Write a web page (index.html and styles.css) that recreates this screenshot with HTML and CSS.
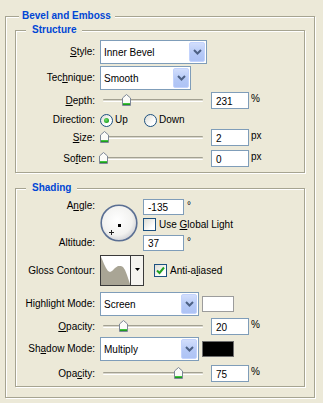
FILE: index.html
```html
<!DOCTYPE html>
<html>
<head>
<meta charset="utf-8">
<link rel="stylesheet" href="styles.css">
</head>
<body>
<div class="group outer">
  <span class="legend">Bevel and Emboss</span>

  <div class="group sub structure">
    <span class="legend">Structure</span>

    <div class="row r24">
      <span class="lbl"><u>S</u>tyle:</span>
      <div class="combo w107">
        <span class="combo-text">Inner Bevel</span>
        <span class="combo-btn"><svg width="9" height="6" viewBox="0 0 9 6"><path d="M1 1 L4.5 4.5 L8 1" fill="none" stroke="#4d6185" stroke-width="2"/></svg></span>
      </div>
    </div>

    <div class="row r24 mt2">
      <span class="lbl">Tec<u>h</u>nique:</span>
      <div class="combo w91">
        <span class="combo-text">Smooth</span>
        <span class="combo-btn"><svg width="9" height="6" viewBox="0 0 9 6"><path d="M1 1 L4.5 4.5 L8 1" fill="none" stroke="#4d6185" stroke-width="2"/></svg></span>
      </div>
    </div>

    <div class="row r17 mt2">
      <span class="lbl"><u>D</u>epth:</span>
      <div class="slider">
        <span class="track"></span>
        <span class="thumb" style="left:23.1%"><svg width="9" height="12" viewBox="0 0 9 12"><path d="M0.5 4 L4.5 0.5 L8.5 4 V11.5 H0.5 Z" fill="#fbfbf8" stroke="#7d8797"/><rect x="1" y="9" width="7" height="1" fill="#3fc43f"/><rect x="1" y="10" width="7" height="1" fill="#1f9a1f"/></svg></span>
      </div>
      <span class="tb">231</span>
      <span class="unit">%</span>
    </div>

    <div class="row r16 mt3">
      <span class="lbl">Direction:</span>
      <span class="opt opt-up"><span class="radio"><span class="dot"></span></span><span class="opt-text">Up</span></span>
      <span class="opt"><span class="radio"></span><span class="opt-text">Down</span></span>
    </div>

    <div class="row r17 mt1">
      <span class="lbl"><u>S</u>ize:</span>
      <div class="slider">
        <span class="track"></span>
        <span class="thumb" style="left:0.8%"><svg width="9" height="12" viewBox="0 0 9 12"><path d="M0.5 4 L4.5 0.5 L8.5 4 V11.5 H0.5 Z" fill="#fbfbf8" stroke="#7d8797"/><rect x="1" y="9" width="7" height="1" fill="#3fc43f"/><rect x="1" y="10" width="7" height="1" fill="#1f9a1f"/></svg></span>
      </div>
      <span class="tb">2</span>
      <span class="unit">px</span>
    </div>

    <div class="row r17 mt4">
      <span class="lbl">So<u>f</u>ten:</span>
      <div class="slider">
        <span class="track"></span>
        <span class="thumb" style="left:0%"><svg width="9" height="12" viewBox="0 0 9 12"><path d="M0.5 4 L4.5 0.5 L8.5 4 V11.5 H0.5 Z" fill="#fbfbf8" stroke="#7d8797"/><rect x="1" y="9" width="7" height="1" fill="#3fc43f"/><rect x="1" y="10" width="7" height="1" fill="#1f9a1f"/></svg></span>
      </div>
      <span class="tb">0</span>
      <span class="unit">px</span>
    </div>
  </div>

  <div class="group sub shading">
    <span class="legend">Shading</span>

    <div class="angle-block">
      <div class="lbl-col">
        <span class="lbl lbl-angle">A<u>n</u>gle:</span>
        <span class="lbl lbl-alt">Altitude:</span>
      </div>
      <svg class="dial" width="38" height="38" viewBox="0 0 38 38">
        <defs>
          <radialGradient id="dg" cx="45%" cy="42%" r="60%">
            <stop offset="0" stop-color="#ffffff"/>
            <stop offset="0.7" stop-color="#f2f2f0"/>
            <stop offset="1" stop-color="#cfd0d4"/>
          </radialGradient>
        </defs>
        <circle cx="19" cy="19" r="17.8" fill="url(#dg)" stroke="#5a6f93" stroke-width="1.6"/>
        <rect x="18" y="20" width="3" height="3" fill="#000"/>
        <path d="M9 28.5 H14 M11.5 26 V31" stroke="#222" stroke-width="1"/>
      </svg>
      <div class="angle-fields">
        <div class="row r16">
          <span class="tb tb-ang">-135</span>
          <span class="unit">°</span>
        </div>
        <div class="row r13 mt3">
          <span class="check"></span>
          <span class="check-text">Use <u>G</u>lobal Light</span>
        </div>
        <div class="row r16 mt4">
          <span class="tb tb-ang">37</span>
          <span class="unit">°</span>
        </div>
      </div>
    </div>

    <div class="row r31 mt4">
      <span class="lbl">Gloss Contour:</span>
      <div class="contour">
        <svg class="contour-graph" width="29" height="29" viewBox="0 0 29 29">
          <path d="M0 1 L1 3 L3 8 L5 12 L7 15 L9 16 L11 15 L14 12 L17 10 L20 10 L22 11 L24 14 L26 19 L28 25 L29 28 L29 29 L0 29 Z" fill="#a9a595"/>
        </svg>
        <span class="contour-btn"><svg width="5" height="3" viewBox="0 0 5 3"><path d="M0 0 H5 L2.5 3 Z" fill="#000"/></svg></span>
      </div>
      <span class="check check-aa"><svg width="11" height="11" viewBox="0 0 11 11"><path d="M2 5.5 L4.5 8 L9 2.5" fill="none" stroke="#21a121" stroke-width="2"/></svg></span>
      <span class="check-text">Anti-a<u>l</u>iased</span>
    </div>

    <div class="row r24 mt6">
      <span class="lbl">Highlight Mode:</span>
      <div class="combo w99">
        <span class="combo-text">Screen</span>
        <span class="combo-btn"><svg width="9" height="6" viewBox="0 0 9 6"><path d="M1 1 L4.5 4.5 L8 1" fill="none" stroke="#4d6185" stroke-width="2"/></svg></span>
      </div>
      <span class="swatch swatch-white"></span>
    </div>

    <div class="row r17 mt2">
      <span class="lbl"><u>O</u>pacity:</span>
      <div class="slider">
        <span class="track"></span>
        <span class="thumb" style="left:20%"><svg width="9" height="12" viewBox="0 0 9 12"><path d="M0.5 4 L4.5 0.5 L8.5 4 V11.5 H0.5 Z" fill="#fbfbf8" stroke="#7d8797"/><rect x="1" y="9" width="7" height="1" fill="#3fc43f"/><rect x="1" y="10" width="7" height="1" fill="#1f9a1f"/></svg></span>
      </div>
      <span class="tb">20</span>
      <span class="unit">%</span>
    </div>

    <div class="row r24 mt2">
      <span class="lbl">Sh<u>a</u>dow Mode:</span>
      <div class="combo w99">
        <span class="combo-text">Multiply</span>
        <span class="combo-btn"><svg width="9" height="6" viewBox="0 0 9 6"><path d="M1 1 L4.5 4.5 L8 1" fill="none" stroke="#4d6185" stroke-width="2"/></svg></span>
      </div>
      <span class="swatch swatch-black"></span>
    </div>

    <div class="row r17 mt4">
      <span class="lbl">Opa<u>c</u>ity:</span>
      <div class="slider">
        <span class="track"></span>
        <span class="thumb" style="left:75%"><svg width="9" height="12" viewBox="0 0 9 12"><path d="M0.5 4 L4.5 0.5 L8.5 4 V11.5 H0.5 Z" fill="#fbfbf8" stroke="#7d8797"/><rect x="1" y="9" width="7" height="1" fill="#3fc43f"/><rect x="1" y="10" width="7" height="1" fill="#1f9a1f"/></svg></span>
      </div>
      <span class="tb">75</span>
      <span class="unit">%</span>
    </div>
  </div>
</div>
</body>
</html>
```

FILE: styles.css
```css
html, body {
  margin: 0;
  padding: 0;
}

body {
  width: 323px;
  height: 403px;
  overflow: hidden;
  background: #ece9d8;
  font-family: "Liberation Sans", Arial, sans-serif;
  font-size: 10px;
  line-height: 12px;
  color: #000;
}

u {
  text-decoration: underline;
  text-underline-offset: 1px;
}

/* etched group boxes */
.group {
  position: relative;
  box-sizing: border-box;
  border: 1px solid #a6a491;
  box-shadow: inset 1px 1px 0 #fff, 1px 1px 0 #fff;
}

.outer {
  margin: 16px 0 0 5px;
  width: 310px;
  height: 382px;
  padding: 13px 9px 0 9px;
}

.sub {
  width: 290px;
}

.structure {
  height: 143px;
  padding-top: 9px;
}

.shading {
  margin-top: 15px;
  height: 199px;
  padding-top: 10px;
}

.legend {
  position: absolute;
  top: -7px;
  background: #ece9d8;
  color: #0046d5;
  font-weight: bold;
  line-height: 12px;
  white-space: nowrap;
}

.outer > .legend {
  left: 13px;
  padding: 0 4px 0 3px;
}

.sub > .legend {
  left: 10px;
  padding: 0 6px;
}

/* rows */
.row {
  display: flex;
  align-items: center;
}

.r13 { height: 13px; }
.r16 { height: 16px; }
.r17 { height: 17px; }
.r24 { height: 24px; }
.r31 { height: 31px; }

.mt1 { margin-top: 1px; }
.mt2 { margin-top: 2px; }
.mt3 { margin-top: 3px; }
.mt4 { margin-top: 4px; }
.mt6 { margin-top: 6px; }

.lbl {
  flex: none;
  width: 79px;
  margin-right: 5px;
  text-align: right;
  white-space: nowrap;
}

/* combo boxes */
.combo {
  flex: none;
  box-sizing: border-box;
  height: 24px;
  display: flex;
  padding: 1px;
  border: 1px solid #7f9db9;
  background: #fff;
}

.w107 { width: 107px; }
.w91 { width: 91px; }
.w99 { width: 99px; }

.combo-text {
  flex: 1;
  display: flex;
  align-items: center;
  padding-left: 2px;
  padding-top: 1px;
  white-space: nowrap;
}

.combo-btn {
  flex: none;
  box-sizing: border-box;
  width: 16px;
  display: flex;
  align-items: center;
  justify-content: center;
  border: 1px solid #c3d3fd;
  border-radius: 2px;
  background: linear-gradient(#d2defc, #b4c8f6 60%, #aec3f5);
}

/* sliders */
.slider {
  position: relative;
  flex: none;
  width: 100px;
  height: 17px;
  margin-left: 3px;
}

.track {
  position: absolute;
  left: 0;
  right: 0;
  top: 7px;
  height: 3px;
  border-radius: 1px;
  background: linear-gradient(#a3a192 0 1px, #d9d7cc 1px 2px, #ffffff 2px);
}

.thumb {
  position: absolute;
  top: 2px;
  margin-left: -4px;
  width: 9px;
  height: 12px;
  display: block;
}

.thumb svg {
  display: block;
}

/* text boxes */
.tb {
  flex: none;
  box-sizing: border-box;
  width: 38px;
  height: 17px;
  margin-left: 8px;
  padding-left: 4px;
  border: 1px solid #7f9db9;
  background: #fff;
  line-height: 15px;
  padding-top: 1px;
}

.tb-ang {
  width: 41px;
  height: 16px;
  margin-left: 0;
  line-height: 14px;
}

.unit {
  align-self: flex-start;
  margin-top: 1px;
  margin-left: 2px;
}

.tb-ang + .unit {
  margin-left: 3px;
}

/* radios */
.opt {
  display: flex;
  align-items: center;
}

.opt-up {
  width: 44px;
}

.radio {
  flex: none;
  box-sizing: border-box;
  width: 13px;
  height: 13px;
  border-radius: 50%;
  border: 1px solid #1c5180;
  background: linear-gradient(135deg, #dcdcd4, #ffffff 70%);
  display: flex;
  align-items: center;
  justify-content: center;
}

.dot {
  width: 5px;
  height: 5px;
  border-radius: 50%;
  background: radial-gradient(circle at 40% 40%, #6ee06e, #21a121 70%);
}

.opt-text {
  margin-left: 2px;
}

/* checkboxes */
.check {
  flex: none;
  box-sizing: border-box;
  width: 13px;
  height: 13px;
  border: 1px solid #1c5180;
  background: linear-gradient(135deg, #dcdcd4, #ffffff 75%);
  display: flex;
  align-items: center;
  justify-content: center;
}

.check-aa {
  margin-left: 10px;
}

.check-text {
  margin-left: 3px;
  white-space: nowrap;
}

/* angle block */
.angle-block {
  display: flex;
  align-items: flex-start;
  height: 52px;
}

.lbl-col {
  flex: none;
  display: flex;
  flex-direction: column;
}

.lbl-angle {
  margin-top: 1px;
}

.lbl-alt {
  margin-top: 25px;
}

.dial {
  flex: none;
  display: block;
  margin-top: 5px;
}

.angle-fields {
  margin-left: 5px;
  display: flex;
  flex-direction: column;
}

/* contour */
.contour {
  flex: none;
  box-sizing: border-box;
  width: 44px;
  height: 31px;
  display: flex;
  border: 1px solid #3a3a3a;
  background: #fff;
}

.contour-graph {
  display: block;
  flex: none;
  border-right: 1px solid #3a3a3a;
}

.contour-btn {
  flex: 1;
  display: flex;
  justify-content: center;
  align-items: center;
  padding-bottom: 2px;
  background: #f5f4ef;
}

/* swatches */
.swatch {
  flex: none;
  box-sizing: border-box;
  width: 32px;
  height: 16px;
  margin-left: 3px;
}

.swatch-white {
  border: 1px solid #9c9c9c;
  background: #fff;
}

.swatch-black {
  border: 1px solid #6e6e6e;
  background: #000;
}
```
